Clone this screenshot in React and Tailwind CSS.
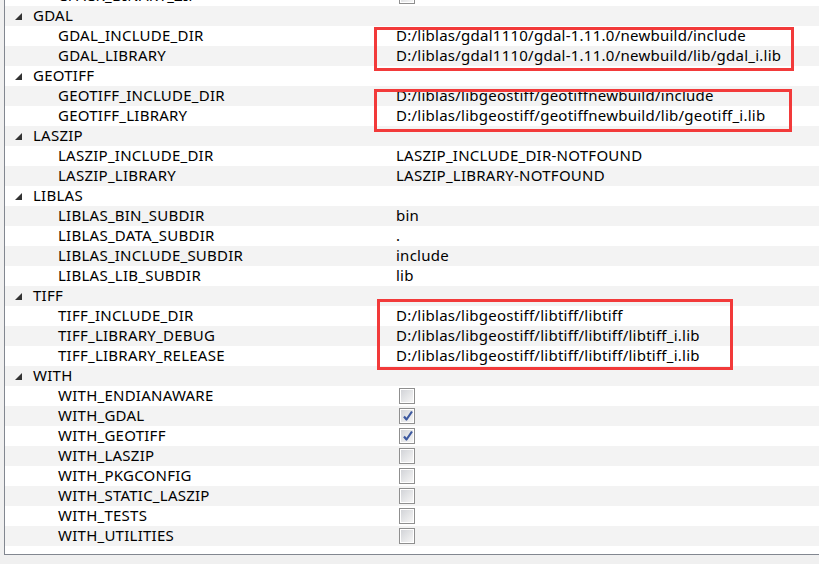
import React from 'react';

const rows = [
    { name: 'CPACK_BINARY_ZIP', check: false },
    { group: 'GDAL' },
    { name: 'GDAL_INCLUDE_DIR', value: 'D:/liblas/gdal1110/gdal-1.11.0/newbuild/include' },
    { name: 'GDAL_LIBRARY', value: 'D:/liblas/gdal1110/gdal-1.11.0/newbuild/lib/gdal_i.lib' },
    { group: 'GEOTIFF' },
    { name: 'GEOTIFF_INCLUDE_DIR', value: 'D:/liblas/libgeostiff/geotiffnewbuild/include' },
    { name: 'GEOTIFF_LIBRARY', value: 'D:/liblas/libgeostiff/geotiffnewbuild/lib/geotiff_i.lib' },
    { group: 'LASZIP' },
    { name: 'LASZIP_INCLUDE_DIR', value: 'LASZIP_INCLUDE_DIR-NOTFOUND' },
    { name: 'LASZIP_LIBRARY', value: 'LASZIP_LIBRARY-NOTFOUND' },
    { group: 'LIBLAS' },
    { name: 'LIBLAS_BIN_SUBDIR', value: 'bin' },
    { name: 'LIBLAS_DATA_SUBDIR', value: '.' },
    { name: 'LIBLAS_INCLUDE_SUBDIR', value: 'include' },
    { name: 'LIBLAS_LIB_SUBDIR', value: 'lib' },
    { group: 'TIFF' },
    { name: 'TIFF_INCLUDE_DIR', value: 'D:/liblas/libgeostiff/libtiff/libtiff' },
    { name: 'TIFF_LIBRARY_DEBUG', value: 'D:/liblas/libgeostiff/libtiff/libtiff/libtiff_i.lib' },
    { name: 'TIFF_LIBRARY_RELEASE', value: 'D:/liblas/libgeostiff/libtiff/libtiff/libtiff_i.lib' },
    { group: 'WITH' },
    { name: 'WITH_ENDIANAWARE', check: false },
    { name: 'WITH_GDAL', check: true },
    { name: 'WITH_GEOTIFF', check: true },
    { name: 'WITH_LASZIP', check: false },
    { name: 'WITH_PKGCONFIG', check: false },
    { name: 'WITH_STATIC_LASZIP', check: false },
    { name: 'WITH_TESTS', check: false },
    { name: 'WITH_UTILITIES', check: false },
];

const Arrow = () => (
    <svg width="7" height="7" viewBox="0 0 7 7" className="shrink-0">
        <polygon points="0,7 7,7 7,0" fill="#333333" />
    </svg>
);

const CheckBox = ({ checked }) => (
    <div className="ml-[3px] w-[16px] h-[16px] border border-[#8f8f8f] bg-white p-[1px]">
        <div className="relative w-full h-full bg-gradient-to-br from-[#d2d4d8] to-[#f6f6f6]">
            {checked && (
                <svg width="12" height="12" viewBox="0 0 12 12" className="absolute left-[1px] top-[0px]">
                    <path d="M2 6.5 L4.5 9.5 L10 1.5" fill="none" stroke="#3e5aa0" strokeWidth="2.2" strokeLinejoin="round" />
                </svg>
            )}
        </div>
    </div>
);

const Row = ({ row, index }) => {
    const bg = index % 2 === 0 ? 'bg-white' : 'bg-[#f3f3f3]';
    if (row.group) {
        return (
            <div className={`h-[20px] flex items-center gap-[11px] pl-[10px] ${bg}`}>
                <Arrow />
                <span className="pb-[2px]">{row.group}</span>
            </div>
        );
    }
    return (
        <div className={`h-[20px] flex items-center ${bg}`}>
            <span className="w-[391px] shrink-0 pl-[53px] pb-[2px] whitespace-nowrap">{row.name}</span>
            {row.check !== undefined ? <CheckBox checked={row.check} /> : <span className="pb-[2px] whitespace-nowrap">{row.value}</span>}
        </div>
    );
};

export default function App() {
    return (
        <div className="relative w-[819px] h-[564px] overflow-hidden bg-[#f0f0f0] text-[15px] tracking-[0.25px] leading-[20px] text-black" style={{ fontFamily: '"Noto Sans", sans-serif' }}>
            <div className="ml-[4px] h-[555px] overflow-hidden border-l border-b border-[#828790] bg-white">
                <div className="-mt-[14px]">
                    {rows.map((row, i) => (
                        <Row key={i} row={row} index={i} />
                    ))}
                </div>
            </div>
            <div className="absolute left-[374px] top-[27px] w-[420px] h-[44px] border-[3px] border-[#f23a3a]" />
            <div className="absolute left-[374px] top-[89px] w-[418px] h-[43px] border-[3px] border-[#f23a3a]" />
            <div className="absolute left-[377px] top-[299px] w-[356px] h-[71px] border-[3px] border-[#f23a3a]" />
        </div>
    );
}
